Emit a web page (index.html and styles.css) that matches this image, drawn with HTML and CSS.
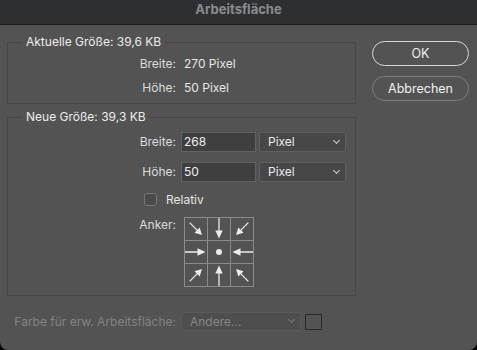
FILE: index.html
```html
<!DOCTYPE html>
<html lang="de">
<head>
<meta charset="utf-8">
<title>Arbeitsfläche</title>
<link rel="stylesheet" href="styles.css">
</head>
<body>
<div class="window">
  <div class="titlebar">Arbeitsfläche</div>
  <div class="content">
    <div class="main">
      <fieldset class="group group-current">
        <legend>Aktuelle Größe: 39,6 KB</legend>
        <div class="rows">
          <span class="lbl">Breite:</span><span class="val">270 Pixel</span>
          <span class="lbl">Höhe:</span><span class="val">50 Pixel</span>
        </div>
      </fieldset>
      <fieldset class="group group-new">
        <legend>Neue Größe: 39,3 KB</legend>
        <div class="form">
          <span class="lbl">Breite:</span>
          <div class="ctrls"><div class="input">268</div><div class="select">Pixel<span class="chev"></span></div></div>
          <span class="lbl">Höhe:</span>
          <div class="ctrls"><div class="input">50</div><div class="select">Pixel<span class="chev"></span></div></div>
          <div class="check-row"><span class="checkbox"></span><span>Relativ</span></div>
          <span class="lbl lbl-top">Anker:</span>
          <div class="anchor">
            <div class="cell"><svg viewBox="0 0 22 22"><g transform="rotate(-45 11 11)"><path d="M11 2V14" class="shaft"/><path d="M7.3 12.5H14.7L11 19.5Z" class="head"/></g></svg></div>
            <div class="cell"><svg viewBox="0 0 22 22"><path d="M11 0V14" class="shaft"/><path d="M7.3 12.5H14.7L11 20.5Z" class="head"/></svg></div>
            <div class="cell"><svg viewBox="0 0 22 22"><g transform="rotate(45 11 11)"><path d="M11 2V14" class="shaft"/><path d="M7.3 12.5H14.7L11 19.5Z" class="head"/></g></svg></div>
            <div class="cell"><svg viewBox="0 0 22 22"><g transform="rotate(-90 11 11)"><path d="M11 0V14" class="shaft"/><path d="M7.3 12.5H14.7L11 20.5Z" class="head"/></g></svg></div>
            <div class="cell"><svg viewBox="0 0 22 22"><circle cx="11" cy="11" r="3" class="head"/></svg></div>
            <div class="cell"><svg viewBox="0 0 22 22"><g transform="rotate(90 11 11)"><path d="M11 0V14" class="shaft"/><path d="M7.3 12.5H14.7L11 20.5Z" class="head"/></g></svg></div>
            <div class="cell"><svg viewBox="0 0 22 22"><g transform="rotate(-135 11 11)"><path d="M11 2V14" class="shaft"/><path d="M7.3 12.5H14.7L11 19.5Z" class="head"/></g></svg></div>
            <div class="cell"><svg viewBox="0 0 22 22"><g transform="rotate(180 11 11)"><path d="M11 0V14" class="shaft"/><path d="M7.3 12.5H14.7L11 20.5Z" class="head"/></g></svg></div>
            <div class="cell"><svg viewBox="0 0 22 22"><g transform="rotate(135 11 11)"><path d="M11 2V14" class="shaft"/><path d="M7.3 12.5H14.7L11 19.5Z" class="head"/></g></svg></div>
          </div>
        </div>
      </fieldset>
      <div class="extra">
        <span class="lbl">Farbe für erw. Arbeitsfläche:</span>
        <div class="select select-dis">Andere...<span class="chev"></span></div>
        <span class="swatch"></span>
      </div>
    </div>
    <div class="buttons">
      <div class="btn btn-default">OK</div>
      <div class="btn">Abbrechen</div>
    </div>
  </div>
</div>
</body>
</html>
```

FILE: styles.css
```css
* { box-sizing: border-box; }
html, body { margin: 0; padding: 0; background: #000; }
body {
  font-family: Inter, "Liberation Sans", Arial, sans-serif;
  font-size: 12px;
  line-height: 16px;
  color: #e2e2e2;
  width: 477px;
  height: 350px;
  overflow: hidden;
}
.window {
  width: 477px;
  height: 350px;
  background: #535353;
  border-radius: 0 0 8px 8px;
  overflow: hidden;
}
.titlebar {
  height: 25px;
  background: #2d3033;
  border-bottom: 1px solid #1b1b1b;
  color: #8a8b8c;
  font-weight: 700;
  font-size: 13px;
  line-height: 19px;
  text-align: center;
}
.content {
  display: flex;
  padding: 9px 8px 0 7px;
  gap: 16px;
}
.main { width: 349px; }
.group {
  margin: 0;
  padding: 0 0 7px 0;
  border: 1px solid #464646;
  min-width: 0;
}
.group legend {
  margin-left: 14px;
  padding: 0 4px;
  line-height: 16px;
  color: #ececec;
}
.group-new { margin-top: 5px; padding-bottom: 8px; }
.rows {
  display: grid;
  grid-template-columns: 168px auto;
  column-gap: 8px;
  row-gap: 8px;
  padding-top: 6px;
}
.lbl { text-align: right; color: #dcdcdc; }
.val { color: #e6e6e6; }
.form {
  display: grid;
  grid-template-columns: 168px auto;
  column-gap: 5px;
  row-gap: 10px;
  padding-top: 7px;
  align-items: center;
}
.ctrls { display: flex; gap: 3px; }
.input {
  width: 75px;
  height: 20px;
  background: #3f3f3f;
  border: 1px solid #626262;
  padding: 0 2px;
  line-height: 18px;
  color: #f0f0f0;
}
.select {
  position: relative;
  width: 87px;
  height: 20px;
  background: #474747;
  border: 1px solid #5f5f5f;
  border-radius: 2px;
  padding: 0 8px;
  line-height: 18px;
  color: #ececec;
}
.chev {
  position: absolute;
  right: 6px;
  top: 5px;
  width: 5px;
  height: 5px;
  border-right: 1.2px solid #cfcfcf;
  border-bottom: 1.2px solid #cfcfcf;
  transform: rotate(45deg);
}
.check-row {
  grid-column: 1 / -1;
  display: flex;
  align-items: center;
  gap: 9px;
  padding-left: 136px;
  height: 15px;
  color: #e6e6e6;
}
.checkbox {
  width: 13px;
  height: 13px;
  border: 1px solid #777;
  border-radius: 3px;
  background: #4b4b4b;
}
.lbl-top { align-self: start; }
.anchor {
  margin-left: 3px;
  width: 70px;
  display: grid;
  grid-template-columns: repeat(3, 23px);
  border-left: 1px solid #8b8b8b;
  border-top: 1px solid #8b8b8b;
}
.cell {
  width: 23px;
  height: 23px;
  border-right: 1px solid #8b8b8b;
  border-bottom: 1px solid #8b8b8b;
}
.cell svg { display: block; width: 22px; height: 22px; }
.shaft { stroke: #ececec; stroke-width: 1.3; fill: none; }
.head { fill: #ececec; }
.extra {
  display: grid;
  grid-template-columns: 169px 120px 17px;
  column-gap: 5px;
  align-items: center;
  margin-top: 16px;
}
.extra .lbl { color: #838383; }
.extra .swatch { margin-left: -1px; }
.select-dis {
  width: 120px;
  height: 19px;
  background: #4e4e4e;
  border-color: #5a5a5a;
  color: #868686;
  line-height: 17px;
}
.select-dis .chev { border-color: #777; top: 4px; }
.swatch {
  width: 17px;
  height: 16px;
  border: 1px solid #2a2a2a;
}
.buttons {
  width: 97px;
  padding-top: 7px;
  display: flex;
  flex-direction: column;
  gap: 10px;
}
.btn {
  height: 25px;
  border: 1px solid #7d7d7d;
  border-radius: 13px;
  text-align: center;
  line-height: 23px;
  font-size: 12.5px;
  color: #f0f0f0;
}
.btn-default { border-color: #d6d6d6; }
```
